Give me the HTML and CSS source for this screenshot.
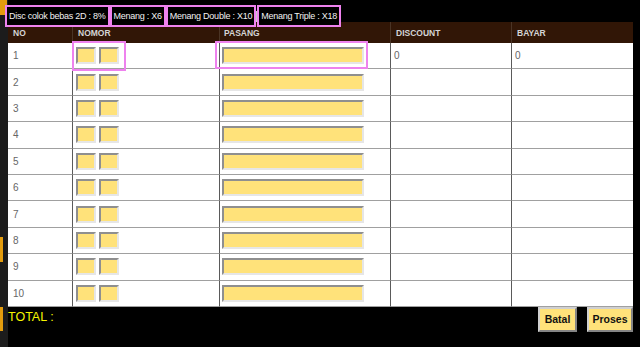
FILE: index.html
```html
<!DOCTYPE html>
<html>
<head>
<meta charset="utf-8">
<link rel="stylesheet" href="styles.css">
</head>
<body>
<div class="page">
  <aside class="edge">
    <span class="seg seg-top"></span>
    <span class="gap gap-1"></span>
    <span class="seg seg-mid"></span>
    <span class="gap gap-2"></span>
    <span class="seg seg-low"></span>
  </aside>
  <main class="main">
    <div class="badges">
      <span class="badge">Disc colok bebas 2D : 8%</span>
      <span class="badge">Menang : X6</span>
      <span class="badge">Menang Double : X10</span>
      <span class="sep"></span>
      <span class="badge">Menang Triple : X18</span>
    </div>
    <table class="grid">
      <colgroup>
        <col class="c-no"><col class="c-nomor"><col class="c-pasang"><col class="c-disc"><col class="c-bayar">
      </colgroup>
      <thead>
        <tr><th class="h-no">NO</th><th class="h-nomor">NOMOR</th><th class="h-pasang">PASANG</th><th class="h-disc">DISCOUNT</th><th class="h-bayar">BAYAR</th></tr>
      </thead>
      <tbody>
        <tr><td class="no">1</td><td class="nomor"><span class="pair hl hl-nomor"><input class="box"><input class="box"></span></td><td class="pasang"><span class="wide-wrap hl hl-pasang"><input class="wide"></span></td><td class="num">0</td><td class="num">0</td></tr>
        <tr><td class="no">2</td><td class="nomor"><span class="pair"><input class="box"><input class="box"></span></td><td class="pasang"><span class="wide-wrap"><input class="wide"></span></td><td class="num"></td><td class="num"></td></tr>
        <tr><td class="no">3</td><td class="nomor"><span class="pair"><input class="box"><input class="box"></span></td><td class="pasang"><span class="wide-wrap"><input class="wide"></span></td><td class="num"></td><td class="num"></td></tr>
        <tr><td class="no">4</td><td class="nomor"><span class="pair"><input class="box"><input class="box"></span></td><td class="pasang"><span class="wide-wrap"><input class="wide"></span></td><td class="num"></td><td class="num"></td></tr>
        <tr><td class="no">5</td><td class="nomor"><span class="pair"><input class="box"><input class="box"></span></td><td class="pasang"><span class="wide-wrap"><input class="wide"></span></td><td class="num"></td><td class="num"></td></tr>
        <tr><td class="no">6</td><td class="nomor"><span class="pair"><input class="box"><input class="box"></span></td><td class="pasang"><span class="wide-wrap"><input class="wide"></span></td><td class="num"></td><td class="num"></td></tr>
        <tr><td class="no">7</td><td class="nomor"><span class="pair"><input class="box"><input class="box"></span></td><td class="pasang"><span class="wide-wrap"><input class="wide"></span></td><td class="num"></td><td class="num"></td></tr>
        <tr><td class="no">8</td><td class="nomor"><span class="pair"><input class="box"><input class="box"></span></td><td class="pasang"><span class="wide-wrap"><input class="wide"></span></td><td class="num"></td><td class="num"></td></tr>
        <tr><td class="no">9</td><td class="nomor"><span class="pair"><input class="box"><input class="box"></span></td><td class="pasang"><span class="wide-wrap"><input class="wide"></span></td><td class="num"></td><td class="num"></td></tr>
        <tr><td class="no">10</td><td class="nomor"><span class="pair"><input class="box"><input class="box"></span></td><td class="pasang"><span class="wide-wrap"><input class="wide"></span></td><td class="num"></td><td class="num"></td></tr>
      </tbody>
    </table>
    <div class="footer">
      <span class="total">TOTAL :</span>
      <div class="actions">
        <button class="btn btn-batal">Batal</button>
        <button class="btn btn-proses">Proses</button>
      </div>
    </div>
  </main>
</div>
</body>
</html>
```
FILE: styles.css
```css
* { box-sizing: border-box; }
html, body {
  margin: 0;
  padding: 0;
  background: #000;
  width: 640px;
  height: 347px;
  overflow: hidden;
  font-family: "Liberation Sans", Arial, sans-serif;
}
.page {
  display: flex;
  height: 347px;
}
.edge {
  width: 8px;
  flex: none;
  background: #1c1c1c;
  display: flex;
  flex-direction: column;
  align-items: flex-start;
}
.seg { display: block; background: #e39c0e; flex: none; }
.seg-top { width: 7px; height: 15px; }
.seg-mid { width: 3px; height: 25px; }
.seg-low { width: 3px; height: 24px; }
.gap { display: block; flex: none; }
.gap-1 { height: 222px; }
.gap-2 { height: 45px; }

.main {
  width: 625px;
  flex: none;
  padding-top: 5px;
  display: flex;
  flex-direction: column;
}
.badges {
  display: flex;
  align-items: center;
  margin-left: -3px;
  margin-bottom: -5px;
  height: 22px;
  position: relative;
  z-index: 2;
}
.badge {
  height: 22px;
  border: 2px solid #ee82ee;
  background: #000;
  color: #f2f2f2;
  font-size: 9px;
  letter-spacing: -0.25px;
  line-height: 18px;
  padding: 0 2px;
  white-space: nowrap;
}
.sep {
  width: 1px;
  height: 11px;
  background: #c8c8c8;
}

.grid {
  width: 625px;
  border-collapse: separate;
  border-spacing: 0;
  table-layout: fixed;
  background: #fff;
}
.c-no { width: 65px; }
.c-nomor { width: 147px; }
.c-pasang { width: 171px; }
.c-disc { width: 121px; }
.c-bayar { width: 121px; }

.grid th {
  background: #311606;
  color: #d4d4d4;
  font-size: 8.5px;
  font-weight: bold;
  text-align: left;
  height: 21px;
  padding: 0 0 0 5px;
  border-right: 1px solid #4a3425;
}
.grid th.h-pasang { padding-left: 4px; }
.grid th:last-child, .grid td:last-child { border-right: none; }

.grid tbody tr { height: 26.4px; }
.grid td {
  border-right: 1px solid #5a5a5a;
  border-bottom: 1px solid #a0a0a0;
  padding: 0 0 0 3px;
  font-size: 10px;
  color: #666;
  vertical-align: middle;
}
.grid td.no { padding-left: 5px; }
.grid td.pasang { padding-left: 2px; }

.pair {
  display: inline-flex;
  gap: 3px;
  vertical-align: middle;
}
.wide-wrap {
  display: inline-flex;
  vertical-align: middle;
}
.box, .wide {
  display: block;
  margin: 0;
  padding: 0;
  height: 17px;
  background: #ffe27a;
  border-style: solid;
  border-width: 2px;
  border-color: #8f8f8f #e6e6e6 #e6e6e6 #8f8f8f;
  outline: none;
}
.box { width: 20px; }
.wide { width: 142px; }

.hl { position: relative; }
.hl::after {
  content: "";
  position: absolute;
  border: 2px solid #ee82ee;
  pointer-events: none;
}
.hl-nomor::after { left: -4px; right: -7px; top: -6px; bottom: -7px; }
.hl-pasang::after { left: -7px; right: -4px; top: -6px; bottom: -5px; }

.footer {
  display: flex;
  justify-content: space-between;
  align-items: flex-start;
}
.total {
  color: #f5f500;
  font-size: 12.5px;
  padding-top: 3px;
  line-height: 14px;
}
.actions {
  display: flex;
  gap: 10px;
}
.btn {
  height: 25px;
  margin: 0;
  padding: 0;
  background: #ffe27a;
  border-style: solid;
  border-width: 2px;
  border-color: #d0d0d0 #858585 #858585 #d0d0d0;
  color: #111;
  font-family: "Liberation Sans", Arial, sans-serif;
  font-size: 10.5px;
  font-weight: bold;
}
.btn-batal { width: 39px; }
.btn-proses { width: 46px; }
```
